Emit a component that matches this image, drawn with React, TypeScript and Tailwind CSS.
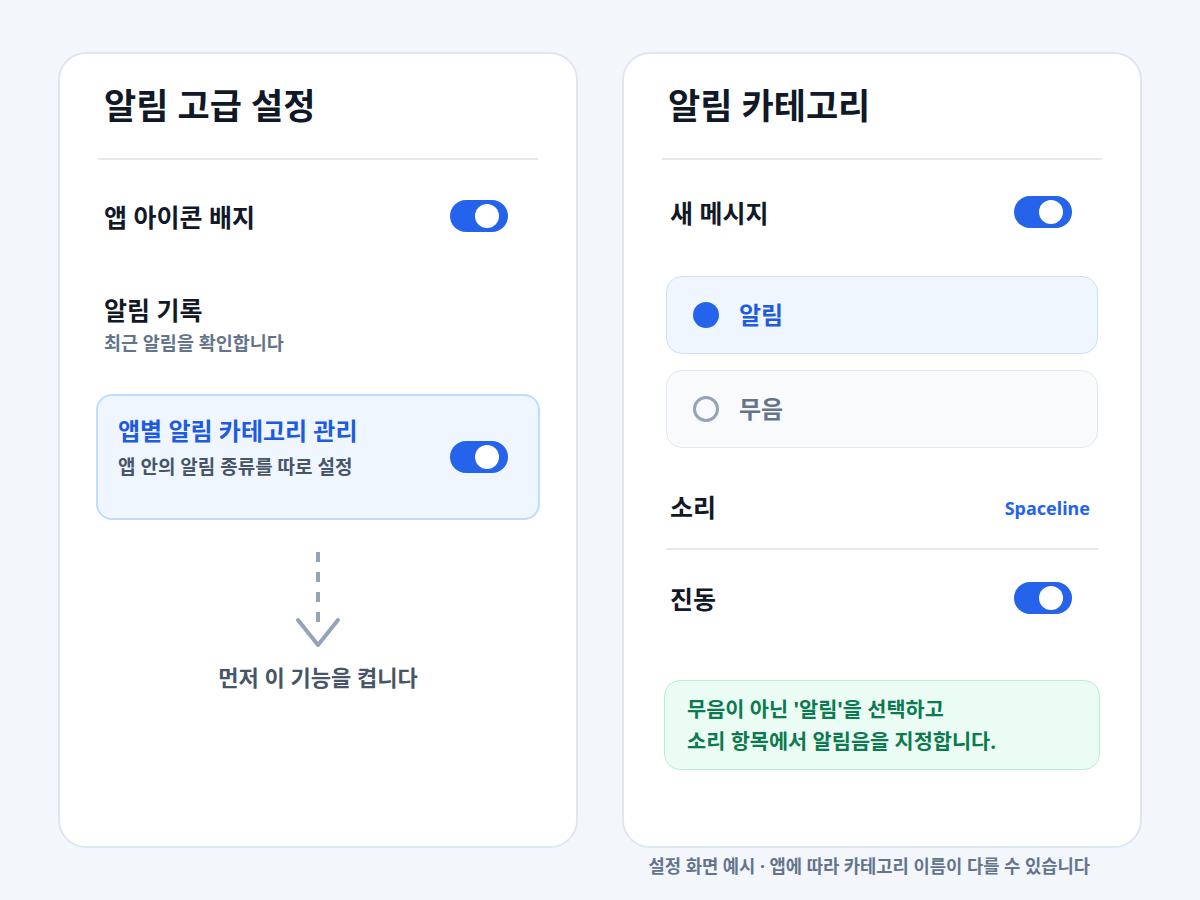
const font = { fontFamily: '"Noto Sans", "Noto Sans CJK KR", sans-serif' };

function Toggle() {
  return (
    <div className="relative w-[58px] h-[32px] rounded-full bg-[#2563eb] shrink-0">
      <span className="absolute left-[25px] top-[4px] w-[24px] h-[24px] rounded-full bg-white" />
    </div>
  );
}

function Radio({ checked, label }: { checked: boolean; label: string }) {
  return (
    <div
      className={
        checked
          ? 'mx-[4px] h-[78px] rounded-[16px] border-[1.5px] border-[#cfe0fb] bg-[#eff6ff] flex items-center pl-[26px] gap-[20px]'
          : 'mx-[4px] h-[78px] rounded-[16px] border-[1.5px] border-[#e2e8f0] bg-[#f8fafc] flex items-center pl-[26px] gap-[20px]'
      }
    >
      {checked ? (
        <span className="w-[26px] h-[26px] rounded-full bg-[#2563eb]" />
      ) : (
        <span className="w-[26px] h-[26px] rounded-full border-[3px] border-[#94a3b8]" />
      )}
      <span className={checked ? 'text-[24px] font-bold text-[#1d5be0]' : 'text-[24px] font-bold text-[#64748b]'}>
        {label}
      </span>
    </div>
  );
}

function DownArrow() {
  return (
    <svg width="48" height="100" viewBox="0 0 48 100" fill="none" className="mx-auto block">
      <line x1="24" y1="0" x2="24" y2="72" stroke="#94a3b8" strokeWidth="4" strokeDasharray="10 10" />
      <polyline
        points="4,68 24,93 44,68"
        stroke="#94a3b8"
        strokeWidth="4"
        strokeLinecap="round"
        strokeLinejoin="round"
      />
    </svg>
  );
}

export default function App() {
  return (
    <div className="min-h-[900px] bg-[#f3f6fb] pt-[52px]" style={font}>
      <div className="flex justify-center gap-[44px]">
        {/* advanced notification settings */}
        <div className="w-[520px] h-[796px] rounded-[28px] border-2 border-[#dfe6f0] bg-white px-[38px] pt-[28px]">
          <h2 className="h-[48px] leading-[48px] pl-[6px] text-[35px] font-bold text-[#111827]">알림 고급 설정</h2>
          <div className="mt-[28px] h-[2px] bg-[#e5e7eb]" />

          <div className="mt-[24px] h-[64px] flex items-center justify-between pl-[6px] pr-[30px]">
            <span className="pt-[3px] text-[25px] font-bold text-[#111827]">앱 아이콘 배지</span>
            <Toggle />
          </div>

          <div className="mt-[46px] pl-[6px]">
            <div className="text-[25px] leading-[32px] font-bold text-[#111827]">알림 기록</div>
            <div className="mt-[5px] text-[18.5px] leading-[24px] font-semibold text-[#64748b]">최근 알림을 확인합니다</div>
          </div>

          <div className="mt-[39px] -mx-[2px] h-[126px] rounded-[16px] border-2 border-[#bfdbfe] bg-[#eff6ff] flex items-center justify-between pl-[20px] pr-[30px]">
            <div className="mb-[20px]">
              <div className="text-[24px] leading-[30px] font-bold text-[#1d5be0]">앱별 알림 카테고리 관리</div>
              <div className="mt-[10px] text-[19px] leading-[22px] font-semibold text-[#475569]">앱 안의 알림 종류를 따로 설정</div>
            </div>
            <Toggle />
          </div>

          <div className="mt-[32px]">
            <DownArrow />
          </div>
          <div className="mt-[11px] text-center text-[22px] leading-[28px] font-bold text-[#475569]">먼저 이 기능을 켭니다</div>
        </div>

        {/* notification category */}
        <div className="w-[520px] h-[796px] rounded-[28px] border-2 border-[#dfe6f0] bg-white px-[38px] pt-[28px]">
          <h2 className="h-[48px] leading-[48px] pl-[6px] text-[35px] font-bold text-[#111827]">알림 카테고리</h2>
          <div className="mt-[28px] h-[2px] bg-[#e5e7eb]" />

          <div className="mt-[20px] h-[64px] flex items-center justify-between pl-[8px] pr-[30px]">
            <span className="pt-[3px] text-[25px] font-bold text-[#111827]">새 메시지</span>
            <Toggle />
          </div>

          <div className="mt-[32px]">
            <Radio checked label="알림" />
          </div>
          <div className="mt-[16px]">
            <Radio checked={false} label="무음" />
          </div>

          <div className="mt-[28px] mx-[4px] h-[64px] flex items-center justify-between pl-[4px] pr-[8px]">
            <span className="text-[25px] font-bold text-[#111827]">소리</span>
            <span className="text-[18px] font-bold text-[#2563eb]">Spaceline</span>
          </div>
          <div className="mt-[8px] mx-[4px] h-[2px] bg-[#e5e7eb]" />

          <div className="mt-[16px] h-[64px] flex items-center justify-between pl-[8px] pr-[30px]">
            <span className="pt-[3px] text-[25px] font-bold text-[#111827]">진동</span>
            <Toggle />
          </div>

          <div className="mt-[50px] mx-[2px] rounded-[16px] border-[1.5px] border-[#b9eed3] bg-[#ebfcf4] px-[22px] py-[12px] text-[20.8px] leading-[32px] font-bold text-[#0b7a4f]">
            <div>무음이 아닌 '알림'을 선택하고</div>
            <div>소리 항목에서 알림음을 지정합니다.</div>
          </div>
        </div>
      </div>

      <div className="mt-[8px] flex justify-end pr-[110px]">
        <span className="text-[17.7px] leading-[20px] font-bold text-[#64748b]">
          설정 화면 예시 · 앱에 따라 카테고리 이름이 다를 수 있습니다
        </span>
      </div>
    </div>
  );
}
